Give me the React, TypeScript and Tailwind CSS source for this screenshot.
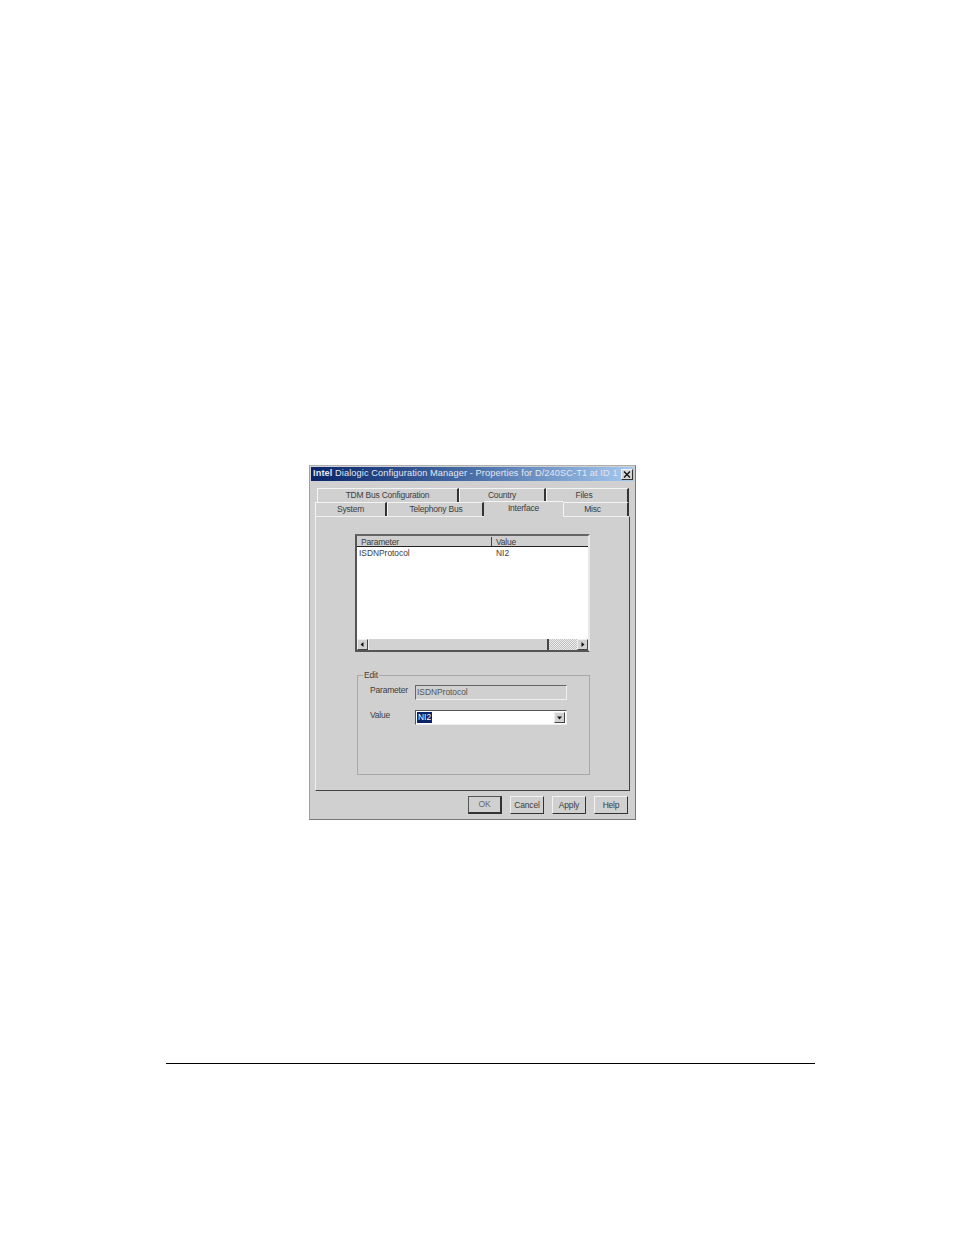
const tabBase =
    "h-full pb-[1px] flex items-center justify-center text-[8.5px] tracking-[-0.22px] text-[#3c3c3c] border-t border-l border-t-[#f4f4f4] border-l-[#f4f4f4] border-r-2 border-r-[#333]";

const Tab = ({ label, width }: { label: string; width: string }) => (
    <div className={`${tabBase} ${width}`}>{label}</div>
);

const ArrowBtn = ({ dir }: { dir: "left" | "right" | "down" }) => (
    <div className="w-[11px] h-[11px] bg-[#d2d2d2] border border-t-[#f0f0f0] border-l-[#f0f0f0] border-r-[#444] border-b-[#444] flex items-center justify-center shrink-0">
        <svg width="7" height="7" viewBox="0 0 7 7">
            {dir === "left" && <path d="M4.5 1 L1.5 3.5 L4.5 6 Z" fill="#111" />}
            {dir === "right" && <path d="M2.5 1 L5.5 3.5 L2.5 6 Z" fill="#111" />}
            {dir === "down" && <path d="M1 2.5 L6 2.5 L3.5 5.5 Z" fill="#111" />}
        </svg>
    </div>
);

const Btn = ({ label, def }: { label: string; def?: boolean }) => (
    <div
        className={`w-[34px] h-[18px] flex items-center justify-center text-[8.5px] tracking-[-0.2px] border ${
            def
                ? "border-[#555] border-b-2 border-r-2 border-b-[#333] border-r-[#333] text-[#666]"
                : "border-t-[#f2f2f2] border-l-[#f2f2f2] border-r-[#333] border-b-[#333] text-[#3c3c3c]"
        }`}
    >
        {label}
    </div>
);

export default function App() {
    return (
        <div className="w-[954px] h-[1235px] bg-white overflow-hidden font-['Liberation_Sans',sans-serif]">
            {/* dialog */}
            <div className="ml-[309px] mt-[465px] w-[327px] h-[355px] bg-[#d0d0d0] border border-t-[#b0b0b0] border-l-[#a0a0a0] border-r-[#777] border-b-[#777] flex flex-col">
                <div className="mx-[1px] mt-[1px] h-[14px] bg-gradient-to-r from-[#0a246a] via-[#4a6fa8] to-[#a6caf0] flex items-center pl-[2px] pr-[1px]">
                    <span className="text-[9.2px] tracking-[0.11px] text-[#e4e6f0] whitespace-nowrap">
                        <b>Intel</b> Dialogic Configuration Manager - Properties for D/240SC-T1 at ID 1
                    </span>
                    <div className="ml-auto shrink-0 w-[12px] h-[11px] bg-[#d6d6d6] border border-t-[#f0f0f0] border-l-[#f0f0f0] border-r-[#333] border-b-[#333] flex items-center justify-center">
                        <svg width="8" height="7" viewBox="0 0 8 7">
                            <path d="M1 0.5 L7 6.5 M7 0.5 L1 6.5" stroke="#111" strokeWidth="1.4" />
                        </svg>
                    </div>
                </div>

                {/* tabs */}
                <div className="mt-[7px] ml-[7px] h-[14px] flex">
                    <Tab label="TDM Bus Configuration" width="w-[142px]" />
                    <Tab label="Country" width="w-[87px]" />
                    <Tab label="Files" width="w-[83px] pr-[6px]" />
                </div>
                <div className="ml-[5px] h-[14px] flex">
                    <Tab label="System" width="w-[72px]" />
                    <Tab label="Telephony Bus" width="w-[97px] pl-[2px]" />
                    <div className="w-[79px] h-[16px] z-10 -mt-[1px] pb-[3px] bg-[#d0d0d0] flex items-center justify-center text-[8.5px] tracking-[-0.22px] text-[#3c3c3c] border-t border-t-[#f4f4f4]">
                        Interface
                    </div>
                    <Tab label="Misc" width="w-[66px] pr-[6px]" />
                </div>

                {/* panel */}
                <div className="ml-[5px] w-[315px] h-[275px] border border-t-[#f0f0f0] border-l-[#f0f0f0] border-r-[#444] border-b-[#444] pt-[17px] pl-[39px]">
                    <div className="w-[235px] h-[118px] bg-white border-2 border-t-[#666] border-l-[#555] border-r-[#e8e8e8] border-b-[#555] flex flex-col">
                        <div className="h-[11px] flex bg-[#d0d0d0] border-b border-[#222] pt-[1px] text-[8.5px] tracking-[-0.2px] leading-[10px] text-[#3c3c3c]">
                            <div className="w-[135px] pl-[4px] border-r border-[#444]">Parameter</div>
                            <div className="pl-[4px]">Value</div>
                        </div>
                        <div className="flex-1 flex text-[8.4px] text-[#3c3c3c] pt-[1px] leading-[10px]">
                            <div className="w-[135px] pl-[2px]">ISDNProtocol</div>
                            <div className="pl-[4px]">NI2</div>
                        </div>
                        <div className="h-[11px] flex bg-[#d2d2d2]">
                            <ArrowBtn dir="left" />
                            <div className="w-[181px] border-l border-l-[#f0f0f0] border-r-2 border-r-[#444]" />
                            <div className="flex-1 bg-[repeating-conic-gradient(#c0c0c0_0_25%,#ececec_0_50%)] bg-[length:2px_2px]" />
                            <ArrowBtn dir="right" />
                        </div>
                    </div>

                    {/* edit group */}
                    <div className="relative mt-[23px] ml-[2px] w-[233px] h-[100px] border border-[#a8a8a8] pt-[9px] pl-[12px]">
                        <span className="absolute -top-[6px] left-[5px] px-[1px] bg-[#d0d0d0] text-[8.5px] tracking-[-0.2px] leading-[11px] text-[#3c3c3c]">
                            Edit
                        </span>
                        <div className="flex items-start">
                            <span className="w-[45px] text-[8.5px] tracking-[-0.2px] leading-[11px] text-[#3c3c3c]">Parameter</span>
                            <div className="w-[152px] h-[15px] border border-t-[#666] border-l-[#666] border-r-[#eee] border-b-[#eee] text-[8.4px] leading-[13px] text-[#555] pl-[1px]">
                                ISDNProtocol
                            </div>
                        </div>
                        <div className="flex items-start mt-[10px]">
                            <span className="w-[45px] text-[8.5px] tracking-[-0.2px] leading-[11px] text-[#3c3c3c]">Value</span>
                            <div className="w-[152px] h-[15px] bg-white border border-t-[#555] border-l-[#555] border-r-[#eee] border-b-[#eee] flex items-center pl-[1px]">
                                <span className="bg-[#0a246a] text-white text-[8.4px] leading-[11px] px-[1px]">NI2</span>
                                <div className="ml-auto mr-[1px]">
                                    <ArrowBtn dir="down" />
                                </div>
                            </div>
                        </div>
                    </div>
                </div>

                {/* buttons */}
                <div className="mt-[5px] pr-[7px] flex justify-end gap-[8px]">
                    <Btn label="OK" def />
                    <Btn label="Cancel" />
                    <Btn label="Apply" />
                    <Btn label="Help" />
                </div>
            </div>

            {/* footer rule */}
            <div className="ml-[166px] mt-[243px] w-[649px] h-[1px] bg-black" />
        </div>
    );
}
